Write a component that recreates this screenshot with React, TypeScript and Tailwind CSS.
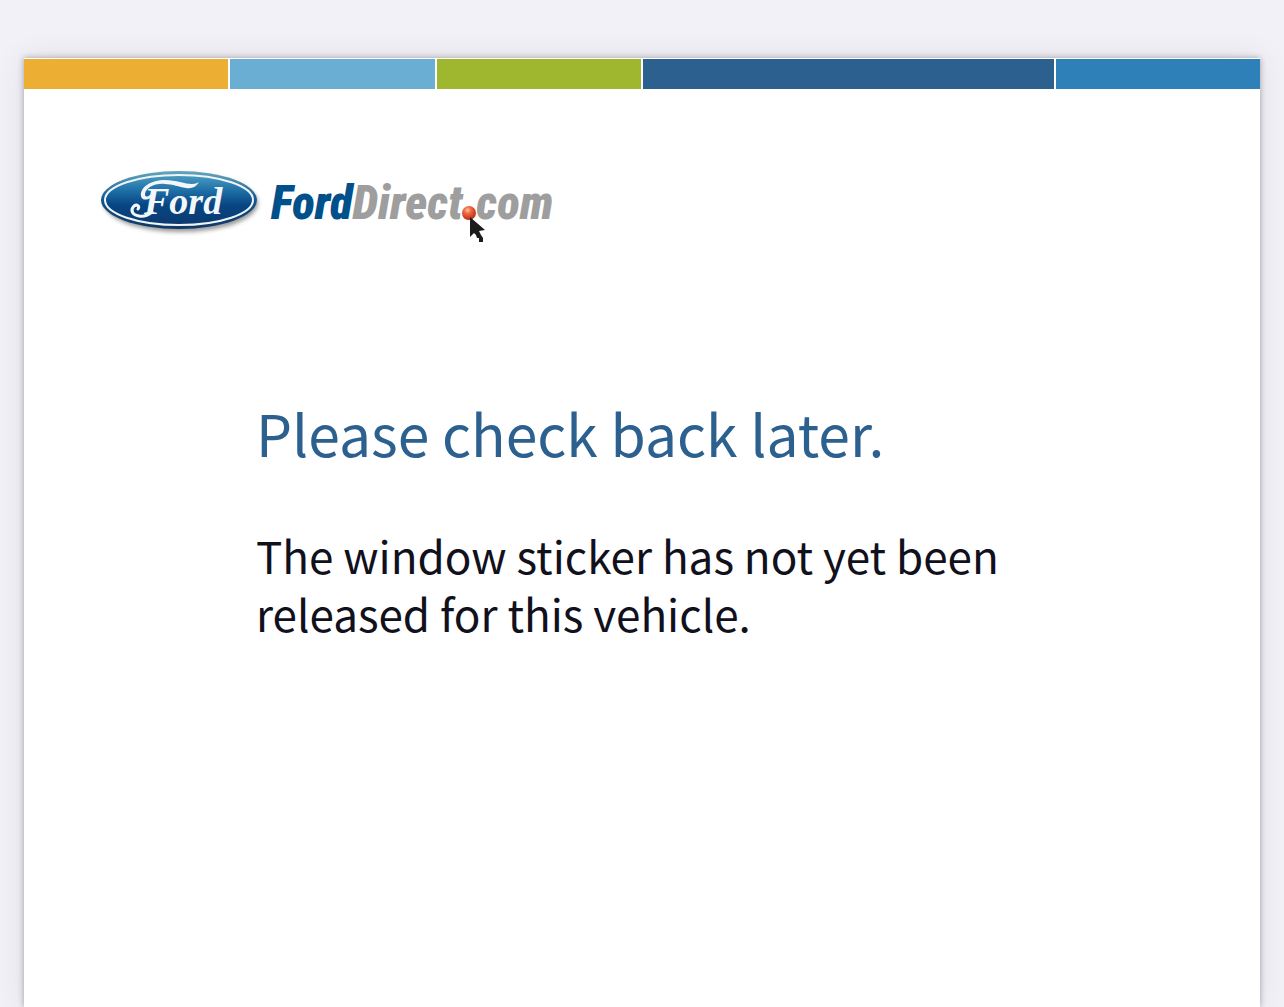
import React from "react";

const stripes = [
  "bg-[#edae34]",
  "bg-[#6aaed4]",
  "bg-[#9fb62f]",
  "bg-[#2c618f] col-span-2",
  "bg-[#2e80b8]",
];

const FordOval = () => (
  <svg
    width="164"
    height="68"
    viewBox="0 0 164 68"
    className="shrink-0"
    role="img"
    aria-label="Ford"
  >
    <defs>
      <linearGradient id="oval" x1="0" y1="0" x2="0" y2="1">
        <stop offset="0" stopColor="#4b9cc0" />
        <stop offset="0.3" stopColor="#1f71a8" />
        <stop offset="0.6" stopColor="#074682" />
        <stop offset="1" stopColor="#0b3a70" />
      </linearGradient>
      <linearGradient id="rim" x1="0" y1="0" x2="0" y2="1">
        <stop offset="0" stopColor="#64a6bd" />
        <stop offset="0.5" stopColor="#14568d" />
        <stop offset="1" stopColor="#123763" />
      </linearGradient>
      <filter id="drop" x="-10%" y="-20%" width="120%" height="150%">
        <feGaussianBlur stdDeviation="2" />
      </filter>
    </defs>
    <ellipse cx="83" cy="34" rx="77" ry="29" fill="#555" opacity="0.6" filter="url(#drop)" />
    <ellipse cx="81" cy="31" rx="78" ry="29" fill="url(#rim)" />
    <ellipse cx="81" cy="31" rx="74" ry="25" fill="url(#oval)" stroke="#eef5fa" strokeWidth="2" />
    <text
      x="46"
      y="45"
      fontSize="38"
      fill="#f4f7fa"
      className="font-['Liberation_Serif',serif] font-bold italic"
    >
      Ford
    </text>
    {/* swashes round the capital */}
    <path
      d="M101 13C98 18 94 20 88 19C81 18 75 15 67 15C56 14 48 19 47 25C47 29 51 28 54 24C55 22 57 23 56 25C53 31 44 33 43 27C42 18 53 11 67 11C78 11 87 15 94 15C97 15 99 14 101 13Z"
      fill="#f4f7fa"
    />
    <path
      d="M54 43C49 47 45 48 41 47C34 46 32 41 36 37C39 35 42 37 40 40"
      fill="none"
      stroke="#f4f7fa"
      strokeWidth="3"
      strokeLinecap="round"
    />
  </svg>
);

const Pointer = () => (
  <svg
    width="26"
    height="40"
    viewBox="0 0 26 40"
    className="absolute left-[189px] top-[35px]"
    aria-hidden="true"
  >
    <defs>
      <radialGradient id="ball" cx="0.4" cy="0.3" r="0.7">
        <stop offset="0" stopColor="#ffc0a0" />
        <stop offset="0.35" stopColor="#ef6b43" />
        <stop offset="0.75" stopColor="#d2401f" />
        <stop offset="1" stopColor="#a93a22" />
      </radialGradient>
    </defs>
    <circle cx="9" cy="9" r="7" fill="url(#ball)" />
    <path
      d="M10 13V33L14 29L16 31L17 34H19V38H23V34L21 31L19 27L25 26Z"
      fill="#1c1c1c"
    />
  </svg>
);

const Logo = () => (
  <a href="#" className="flex items-center gap-[9px] w-fit">
    <FordOval />
    <span className="relative font-['Roboto_Condensed','Liberation_Sans_Narrow',sans-serif] text-[47px] leading-[68px] font-black italic text-[#9e9e9e]">
      <span className="text-[#00508c]">Ford</span>Direct
      <span className="text-[#d2401f]">.</span>com
      <Pointer />
    </span>
  </a>
);

const App = () => {
  return (
    <div className="min-h-screen flex flex-col bg-[#f2f1f7] px-6 pt-[58px] font-['Noto_Sans_CJK_SC',sans-serif]">
      <div className="flex-1 bg-white pt-px shadow-[0_0_6px_rgba(60,55,60,0.4),0_0_28px_rgba(60,55,60,0.1)]">
        <div className="grid grid-cols-6 gap-0.5">
          {stripes.map((stripe) => (
            <div key={stripe} className={`h-[30px] ${stripe}`} />
          ))}
        </div>
        <header className="pl-[74px] pt-20">
          <Logo />
        </header>
        <main className="pl-[232px] pr-[232px] pt-[159px]">
          <h1 className="text-[57px] leading-[72px] text-[#2c618f]">
            Please check back later.
          </h1>
          <p className="mt-[58px] text-[44px] leading-[58px] text-[#11101d]">
            The window sticker has not yet been released for this vehicle.
          </p>
        </main>
      </div>
    </div>
  );
};

export default App;
